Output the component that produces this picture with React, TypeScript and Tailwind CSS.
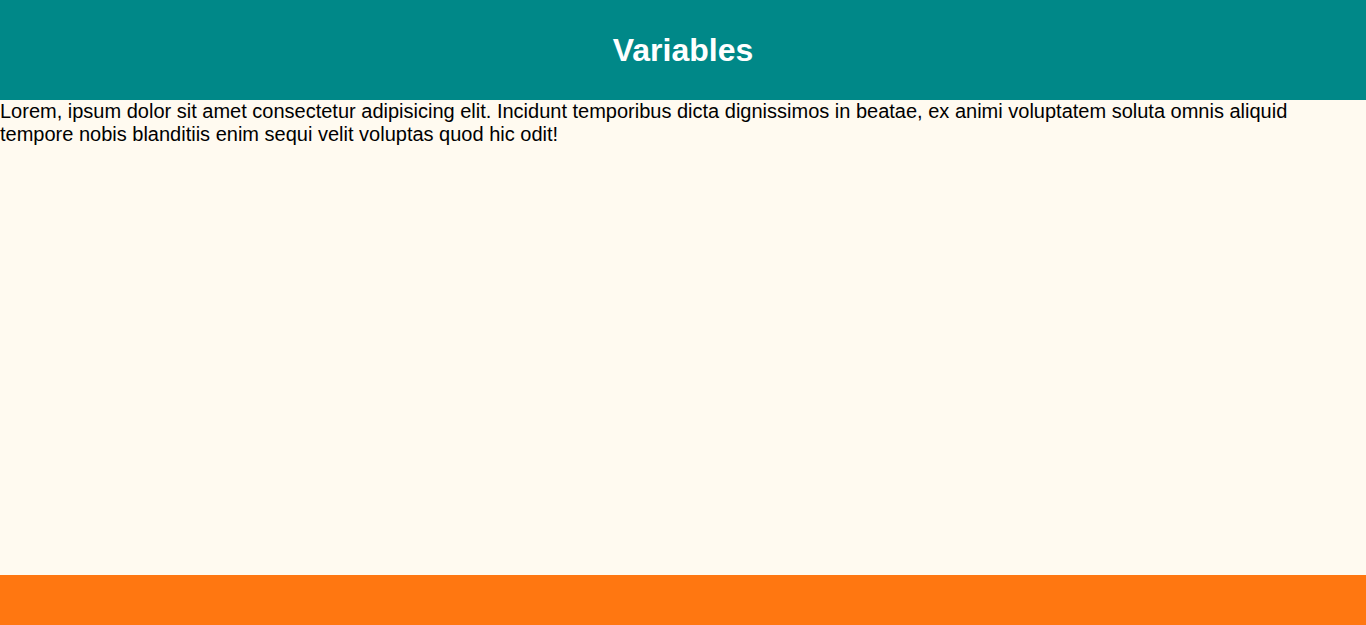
export default function App() {
  return (
    <div className="flex min-h-screen flex-col bg-[#fffaf0] font-['Liberation_Sans',Arial,sans-serif] text-black">
      <header className="flex h-[100px] items-center justify-center bg-[#008888]">
        <h1 className="text-[32px] font-bold text-white">Variables</h1>
      </header>
      <main className="flex-1 text-[20px] leading-[23px]">
        Lorem, ipsum dolor sit amet consectetur adipisicing elit. Incidunt temporibus dicta dignissimos in beatae, ex
        animi voluptatem soluta omnis aliquid tempore nobis blanditiis enim sequi velit voluptas quod hic odit!
      </main>
      <footer className="h-[50px] bg-[#ff7711]" />
    </div>
  );
}
